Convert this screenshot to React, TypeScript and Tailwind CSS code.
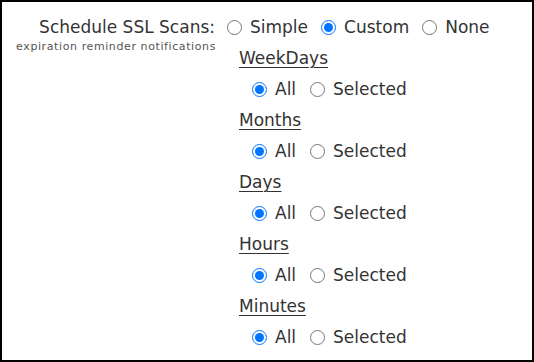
import React from 'react'

interface RadioProps {
    name: string
    label: string
    checked?: boolean
}

function Radio({ name, label, checked }: RadioProps) {
    return (
        <label className="flex items-center gap-[8px]">
            <input type="radio" name={name} defaultChecked={checked} className="m-0 h-[15px] w-[15px] accent-[#0075ff]" />
            <span>{label}</span>
        </label>
    )
}

const sections = ['WeekDays', 'Months', 'Days', 'Hours', 'Minutes']

export default function App() {
    return (
        <div
            className="flex h-[362px] w-[534px] border-2 border-black bg-white pt-[10px] text-[#333] text-[17px]"
            style={{ fontFamily: '"DejaVu Sans", sans-serif' }}
        >
            <div className="flex w-[214px] flex-col items-end">
                <div className="flex h-[31px] items-center pr-[1px]">Schedule SSL Scans:</div>
                <div className="-mt-[4px] text-[11px] tracking-[0.6px] text-[#555]">expiration reminder notifications</div>
            </div>
            <div className="flex flex-col pl-[11px]">
                <div className="flex h-[31px] items-center gap-[13px]">
                    <Radio name="mode" label="Simple" />
                    <Radio name="mode" label="Custom" checked />
                    <Radio name="mode" label="None" />
                </div>
                {sections.map((section) => (
                    <div key={section} className="flex flex-col pl-[12px]">
                        <div className="flex h-[31px] items-center">
                            <span className="underline underline-offset-[3px] decoration-1">{section}</span>
                        </div>
                        <div className="flex h-[31px] items-center gap-[14px] pl-[13px]">
                            <Radio name={section} label="All" checked />
                            <Radio name={section} label="Selected" />
                        </div>
                    </div>
                ))}
            </div>
        </div>
    )
}
